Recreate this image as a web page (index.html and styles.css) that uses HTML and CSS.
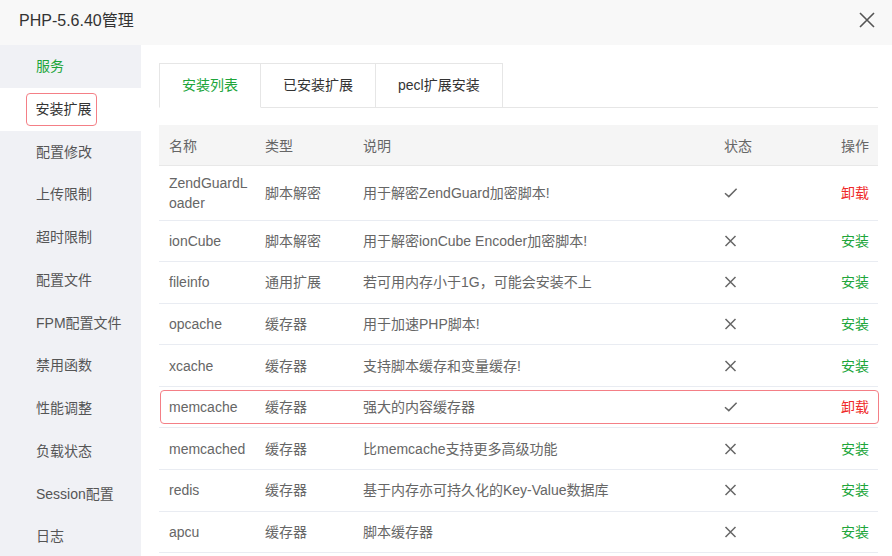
FILE: index.html
```html
<!DOCTYPE html>
<html>
<head>
    <meta charset="utf-8">
    <link rel="stylesheet" href="styles.css">
</head>
<body>

<div class="layer">
    <div class="layer-title">
        PHP-5.6.40管理
        <span class="layer-close">
            <svg width="16" height="16" viewBox="0 0 16 16"><path d="M1 1L15 15M15 1L1 15" stroke="#555" stroke-width="1.6" fill="none"/></svg>
        </span>
    </div>

    <div class="layer-body">
        <ul class="side-menu">
            <li class="on">服务</li>
            <li class="cur"><span class="mark">安装扩展</span></li>
            <li>配置修改</li>
            <li>上传限制</li>
            <li>超时限制</li>
            <li>配置文件</li>
            <li>FPM配置文件</li>
            <li>禁用函数</li>
            <li>性能调整</li>
            <li>负载状态</li>
            <li>Session配置</li>
            <li>日志</li>
        </ul>

        <div class="main">
            <div class="tab-nav">
                <span class="tab on">安装列表</span>
                <span class="tab">已安装扩展</span>
                <span class="tab">pecl扩展安装</span>
            </div>

            <table class="ext-table">
                <thead>
                <tr>
                    <th class="c-name">名称</th>
                    <th class="c-type">类型</th>
                    <th>说明</th>
                    <th class="c-status">状态</th>
                    <th class="c-opt">操作</th>
                </tr>
                </thead>
                <tbody>
                <tr>
                    <td class="c-name">ZendGuardLoader</td>
                    <td>脚本解密</td>
                    <td>用于解密ZendGuard加密脚本!</td>
                    <td class="c-status"><svg class="ico" viewBox="0 0 14 12"><path d="M1 6.2L4.8 9.6L12.6 1.8"/></svg></td>
                    <td class="c-opt"><a class="btn-del">卸载</a></td>
                </tr>
                <tr>
                    <td class="c-name">ionCube</td>
                    <td>脚本解密</td>
                    <td>用于解密ionCube Encoder加密脚本!</td>
                    <td class="c-status"><svg class="ico" viewBox="0 0 14 12"><path d="M1.5 1L11.5 11M11.5 1L1.5 11"/></svg></td>
                    <td class="c-opt"><a class="btn-add">安装</a></td>
                </tr>
                <tr>
                    <td class="c-name">fileinfo</td>
                    <td>通用扩展</td>
                    <td>若可用内存小于1G，可能会安装不上</td>
                    <td class="c-status"><svg class="ico" viewBox="0 0 14 12"><path d="M1.5 1L11.5 11M11.5 1L1.5 11"/></svg></td>
                    <td class="c-opt"><a class="btn-add">安装</a></td>
                </tr>
                <tr>
                    <td class="c-name">opcache</td>
                    <td>缓存器</td>
                    <td>用于加速PHP脚本!</td>
                    <td class="c-status"><svg class="ico" viewBox="0 0 14 12"><path d="M1.5 1L11.5 11M11.5 1L1.5 11"/></svg></td>
                    <td class="c-opt"><a class="btn-add">安装</a></td>
                </tr>
                <tr>
                    <td class="c-name">xcache</td>
                    <td>缓存器</td>
                    <td>支持脚本缓存和变量缓存!</td>
                    <td class="c-status"><svg class="ico" viewBox="0 0 14 12"><path d="M1.5 1L11.5 11M11.5 1L1.5 11"/></svg></td>
                    <td class="c-opt"><a class="btn-add">安装</a></td>
                </tr>
                <tr class="marked">
                    <td class="c-name">memcache</td>
                    <td>缓存器</td>
                    <td>强大的内容缓存器</td>
                    <td class="c-status"><svg class="ico" viewBox="0 0 14 12"><path d="M1 6.2L4.8 9.6L12.6 1.8"/></svg></td>
                    <td class="c-opt"><a class="btn-del">卸载</a></td>
                </tr>
                <tr>
                    <td class="c-name">memcached</td>
                    <td>缓存器</td>
                    <td>比memcache支持更多高级功能</td>
                    <td class="c-status"><svg class="ico" viewBox="0 0 14 12"><path d="M1.5 1L11.5 11M11.5 1L1.5 11"/></svg></td>
                    <td class="c-opt"><a class="btn-add">安装</a></td>
                </tr>
                <tr>
                    <td class="c-name">redis</td>
                    <td>缓存器</td>
                    <td>基于内存亦可持久化的Key-Value数据库</td>
                    <td class="c-status"><svg class="ico" viewBox="0 0 14 12"><path d="M1.5 1L11.5 11M11.5 1L1.5 11"/></svg></td>
                    <td class="c-opt"><a class="btn-add">安装</a></td>
                </tr>
                <tr>
                    <td class="c-name">apcu</td>
                    <td>缓存器</td>
                    <td>脚本缓存器</td>
                    <td class="c-status"><svg class="ico" viewBox="0 0 14 12"><path d="M1.5 1L11.5 11M11.5 1L1.5 11"/></svg></td>
                    <td class="c-opt"><a class="btn-add">安装</a></td>
                </tr>
                <tr class="tail">
                    <td class="c-name"></td>
                    <td></td>
                    <td></td>
                    <td class="c-status"></td>
                    <td class="c-opt"></td>
                </tr>
                </tbody>
            </table>
        </div>
    </div>
</div>

</body>
</html>
```

FILE: styles.css
```css
/* общие стили */

* {
    box-sizing: border-box;
}

body {
    margin: 0;
    font-family: "Liberation Sans", "Noto Sans CJK SC", sans-serif;
    font-size: 14px;
    color: #666;
    background: #fff;
}

.layer {
    width: 892px;
    height: 556px;
    overflow: hidden;
}

.layer-title {
    position: relative;
    height: 45px;
    line-height: 41px;
    padding-left: 19px;
    font-size: 16px;
    color: #333;
    background: #f8f8f8;
}

.layer-close {
    position: absolute;
    right: 17px;
    top: 12px;
    width: 16px;
    height: 16px;
    line-height: 0;
}

.layer-body {
    display: flex;
    height: 511px;
}

/* левое меню */

.side-menu {
    width: 141px;
    flex: none;
    margin: 0;
    padding: 0;
    list-style: none;
    background: #f0f1f5;
}

.side-menu li {
    height: 42.75px;
    line-height: 42px;
    padding-left: 36px;
    color: #555;
}

.side-menu li.on {
    color: #20a53a;
}

.side-menu li.cur {
    background: #fff;
    padding-left: 26px;
}

.side-menu .mark {
    display: inline-block;
    height: 33px;
    line-height: 30px;
    padding: 0 4px 0 8.5px;
    border: 1.5px solid #f47f86;
    border-radius: 4px;
    color: #333;
}

/* вкладки */

.main {
    flex: 1;
    padding: 18px 14px 0 18px;
}

.tab-nav {
    display: flex;
    height: 45px;
    border-bottom: 1px solid #e6e6e6;
}

.tab {
    height: 45px;
    line-height: 43px;
    padding: 0 22px;
    border: 1px solid #e6e6e6;
    border-left: none;
    color: #333;
    background: #fff;
}

.tab:first-child {
    border-left: 1px solid #e6e6e6;
}

.tab.on {
    color: #20a53a;
    border-bottom-color: #fff;
}

/* таблица расширений */

.ext-table {
    width: 100%;
    margin-top: 17px;
    border-collapse: collapse;
    table-layout: fixed;
}

.ext-table th {
    height: 40px;
    padding: 0 10px;
    text-align: left;
    font-weight: normal;
    color: #666;
    background: #f5f5f5;
    border-bottom: 1px solid #e8e8e8;
}

.ext-table td {
    height: 41.6px;
    padding: 7px 10px;
    line-height: 20px;
    color: #666;
    border-bottom: 1px solid #e9ecf2;
}

.ext-table .c-name {
    width: 96px;
    padding-right: 4px;
    word-break: break-all;
}

.ext-table th.c-type {
    width: 98px;
}

.ext-table .c-status {
    width: 105px;
    padding-left: 11px;
}

.ext-table .c-opt {
    width: 60px;
    text-align: right;
    padding-right: 9px;
}

.ico {
    display: block;
    width: 14px;
    height: 12px;
    fill: none;
    stroke: #666;
    stroke-width: 1.5;
}

.btn-add {
    color: #20a53a;
}

.btn-del {
    color: #ef2a2a;
}

/* красная рамка вокруг строки */

.marked td {
    position: relative;
}

.marked td:first-child::before {
    content: "";
    position: absolute;
    left: 1px;
    top: 3px;
    width: 717px;
    bottom: 3px;
    border: 1.5px solid #f47f86;
    border-radius: 4px;
    pointer-events: none;
}
```
